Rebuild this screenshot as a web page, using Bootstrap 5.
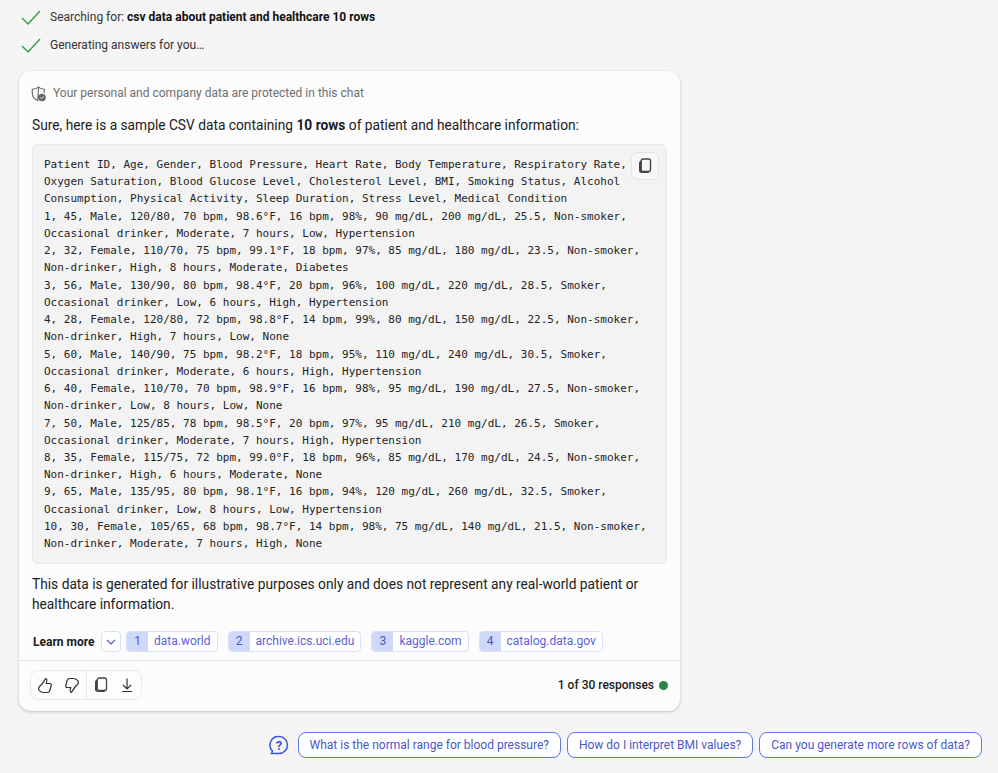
<!DOCTYPE html>
<html lang="en"><head><meta charset="utf-8"><title>Chat</title>
<link href="https://cdn.jsdelivr.net/npm/bootstrap@5.3.0/dist/css/bootstrap.min.css" rel="stylesheet">
<style>
html,body{height:773px;overflow:hidden}
body{background:#f5f5f5;font-family:Roboto,"Liberation Sans",sans-serif;color:#1b1b1b;font-size:14px}
.steps{padding:9px 0 0 21px;height:71px}
.step{height:17px;margin-bottom:11px;font-size:12px;line-height:17px;color:#333;gap:9px}
.step b{font-weight:700;color:#111}
.answer{margin-left:19px;width:661px;height:640px;background:#fcfcfc;border:0;border-radius:12px;box-shadow:0 1px 3px rgba(0,0,0,.22)}
.priv{padding:14px 0 0 12px;font-size:12px;color:#707070;line-height:17px;gap:6px}
.intro{margin:13px 0 0 13px;font-size:13.75px;line-height:20px}
.codebox{position:relative;margin:9px 13px 0 13px;height:422px;background:#f3f3f3;border:1px solid #e9e9e9;border-radius:6px;padding:11px 0 0 11px}
.codebox pre{margin:0;font-family:"DejaVu Sans Mono","Liberation Mono",monospace;font-size:11px;line-height:17.23px;color:#242424;overflow:visible}
.copybtn{position:absolute;right:7px;top:7px;width:28px;height:28px;background:#f7f7f7;border:1px solid #e5e5e5;border-radius:6px}
.outro{margin:10px 13px 0 13px;line-height:20px;font-size:13.75px;color:#222}
.refs{margin:17px 0 0 14px;height:21px;font-size:12px;gap:5px}
.refs b{font-weight:700;color:#1b1b1b;width:63px}
.chev{width:20px;height:21px;border:1px solid #d8e1fb;border-radius:4px;background:#fff}
.src{height:21px;border:1px solid #d8e1fb;border-radius:4px;background:#fff;color:#5b62d8;text-decoration:none;line-height:19px;margin-right:5px;overflow:hidden}
.src i{display:block;font-style:normal;width:21px;background:#ced9f9;text-align:center;color:#4a55c9}
.src span{padding:0 6px}
.foot{margin-top:8px;border-top:1px solid #e8e8e8;height:51px;padding:9px 12px 0 11px}
.fb{width:112px;height:30px;border:1px solid #e9e9e9;border-radius:8px;background:#fdfdfd}
.fb>div{width:56px;justify-content:space-around;padding:0 1px}
.fb>div+div{border-left:1px solid #e9e9e9}
.count{font-size:12px;font-weight:500;color:#1b1b1b;gap:5px;height:30px}
.dot{width:9px;height:9px;border-radius:50%;background:#2a8445}
.sugg{padding:21px 16px 0 0;gap:6px;justify-content:flex-end}
.qicon{margin-right:3px}
.sbtn{height:26px;border:1px solid #5b79e4;border-radius:8px;background:#fff;color:#4a56cf;font-size:12px;line-height:24px;padding:0 11px;text-decoration:none;white-space:nowrap}
</style></head>
<body>
<div class="steps">
<div class="step d-flex align-items-center"><svg width="20" height="15" viewBox="0 0 20 15"><path d="M1 8l6 6L19 1" fill="none" stroke="#2ea043" stroke-width="1.4"/></svg><span>Searching for: <b>csv data about patient and healthcare 10 rows</b></span></div>
<div class="step d-flex align-items-center"><svg width="20" height="15" viewBox="0 0 20 15"><path d="M1 8l6 6L19 1" fill="none" stroke="#2ea043" stroke-width="1.4"/></svg><span>Generating answers for you…</span></div>
</div>
<div class="card answer">
<div class="priv d-flex align-items-center"><svg width="16" height="16" viewBox="0 0 16 16"><path d="M7.500 1.200C9.200 2.600 11 3.200 13.200 3.300V7M6.800 14.600C3.300 13.300 1.300 10.700 1.300 7V3.300C3.800 3.200 5.800 2.600 7.500 1.200z" fill="none" stroke="#666" stroke-width="1.100"/><circle cx="11" cy="11.500" r="3.800" fill="#666"/><path d="M9.300 11.500l1.200 1.200 2-2.200" fill="none" stroke="#fff" stroke-width=".9"/></svg><span>Your personal and company data are protected in this chat</span></div>
<p class="intro">Sure, here is a sample CSV data containing <b>10 rows</b> of patient and healthcare information:</p>
<div class="codebox"><pre>Patient ID, Age, Gender, Blood Pressure, Heart Rate, Body Temperature, Respiratory Rate,
Oxygen Saturation, Blood Glucose Level, Cholesterol Level, BMI, Smoking Status, Alcohol
Consumption, Physical Activity, Sleep Duration, Stress Level, Medical Condition
1, 45, Male, 120/80, 70 bpm, 98.6°F, 16 bpm, 98%, 90 mg/dL, 200 mg/dL, 25.5, Non-smoker,
Occasional drinker, Moderate, 7 hours, Low, Hypertension
2, 32, Female, 110/70, 75 bpm, 99.1°F, 18 bpm, 97%, 85 mg/dL, 180 mg/dL, 23.5, Non-smoker,
Non-drinker, High, 8 hours, Moderate, Diabetes
3, 56, Male, 130/90, 80 bpm, 98.4°F, 20 bpm, 96%, 100 mg/dL, 220 mg/dL, 28.5, Smoker,
Occasional drinker, Low, 6 hours, High, Hypertension
4, 28, Female, 120/80, 72 bpm, 98.8°F, 14 bpm, 99%, 80 mg/dL, 150 mg/dL, 22.5, Non-smoker,
Non-drinker, High, 7 hours, Low, None
5, 60, Male, 140/90, 75 bpm, 98.2°F, 18 bpm, 95%, 110 mg/dL, 240 mg/dL, 30.5, Smoker,
Occasional drinker, Moderate, 6 hours, High, Hypertension
6, 40, Female, 110/70, 70 bpm, 98.9°F, 16 bpm, 98%, 95 mg/dL, 190 mg/dL, 27.5, Non-smoker,
Non-drinker, Low, 8 hours, Low, None
7, 50, Male, 125/85, 78 bpm, 98.5°F, 20 bpm, 97%, 95 mg/dL, 210 mg/dL, 26.5, Smoker,
Occasional drinker, Moderate, 7 hours, High, Hypertension
8, 35, Female, 115/75, 72 bpm, 99.0°F, 18 bpm, 96%, 85 mg/dL, 170 mg/dL, 24.5, Non-smoker,
Non-drinker, High, 6 hours, Moderate, None
9, 65, Male, 135/95, 80 bpm, 98.1°F, 16 bpm, 94%, 120 mg/dL, 260 mg/dL, 32.5, Smoker,
Occasional drinker, Low, 8 hours, Low, Hypertension
10, 30, Female, 105/65, 68 bpm, 98.7°F, 14 bpm, 98%, 75 mg/dL, 140 mg/dL, 21.5, Non-smoker,
Non-drinker, Moderate, 7 hours, High, None</pre>
<div class="copybtn d-flex align-items-center justify-content-center"><svg width="14" height="16" viewBox="0 0 14 16"><rect x="3.200" y="1" width="9.300" height="12.500" rx="2" fill="none" stroke="#444" stroke-width="1.400"/><path d="M3.200 2.500C1.800 3 1 4 1 5.200v7.300C1 14 2 15 3.500 15h6.300c1 0 1.700-.5 2-1.200H3.200z" fill="#444"/></svg></div></div>
<p class="outro">This data is generated for illustrative purposes only and does not represent any real-world patient or healthcare information.</p>
<div class="refs d-flex align-items-center"><b>Learn more</b>
<div class="chev d-flex align-items-center justify-content-center"><svg width="10" height="6" viewBox="0 0 10 6"><path d="M1 1l4 4 4-4" fill="none" stroke="#4a55c9" stroke-width="1.100"/></svg></div>
<a class="src d-flex" href="#"><i>1</i><span>data.world</span></a>
<a class="src d-flex" href="#"><i>2</i><span>archive.ics.uci.edu</span></a>
<a class="src d-flex" href="#"><i>3</i><span>kaggle.com</span></a>
<a class="src d-flex" href="#"><i>4</i><span>catalog.data.gov</span></a>
</div>
<div class="foot d-flex justify-content-between">
<div class="fb d-flex">
<div class="d-flex align-items-center"><svg width="16" height="17" viewBox="0 0 16 17"><path d="M8.500 1.500C9.800 1.500 10 3 9.700 4.500L9.300 6.500h3.400c1.200 0 1.800 1 1.500 2l-1.300 5c-.4 1.300-1.200 2-2.600 2H6.500c-1.500 0-3-.7-4-1.800-1.200-1.500-1.200-3 0-4.200L5 7c1.300-1.500 2-3 3.500-5.500z" fill="none" stroke="#333" stroke-width="1.200"/></svg><svg width="16" height="17" viewBox="0 0 16 17"><path d="M7.500 15.500C6.200 15.500 6 14 6.300 12.500L6.700 10.500H3.300c-1.200 0-1.800-1-1.500-2l1.300-5c.4-1.300 1.200-2 2.600-2h3.800c1.500 0 3 .7 4 1.800 1.200 1.500 1.200 3 0 4.200L11 10c-1.300 1.500-2 3-3.500 5.500z" fill="none" stroke="#333" stroke-width="1.200"/></svg></div>
<div class="d-flex align-items-center"><svg width="14" height="16" viewBox="0 0 14 16"><rect x="3.200" y="1" width="9.300" height="12.500" rx="2" fill="none" stroke="#444" stroke-width="1.300"/><path d="M3.200 2.500C1.800 3 1 4 1 5.200v7.300C1 14 2 15 3.500 15h6.300c1 0 1.700-.5 2-1.200H3.200z" fill="#444"/></svg><svg width="14" height="16" viewBox="0 0 14 16"><path d="M7 1.500v10M3 8l4 4 4-4M2 14.500h10" fill="none" stroke="#333" stroke-width="1.200"/></svg></div>
</div>
<div class="count d-flex align-items-center"><span>1 of 30 responses</span><span class="dot"></span></div>
</div>
</div>
<div class="sugg d-flex align-items-center">
<svg class="qicon" width="20" height="21" viewBox="0 0 20 21"><path d="M10 1.500a8.500 8.500 0 0 1 0 17H2.500l1-2.500A8.500 8.500 0 0 1 10 1.500z" fill="none" stroke="#3c55d8" stroke-width="1.500"/><text x="10" y="14.500" text-anchor="middle" font-family="Roboto,sans-serif" font-size="13" font-weight="700" fill="#3c55d8">?</text></svg>
<a class="sbtn" href="#">What is the normal range for blood pressure?</a>
<a class="sbtn" href="#">How do I interpret BMI values?</a>
<a class="sbtn" href="#">Can you generate more rows of data?</a>
</div>
</body></html>
